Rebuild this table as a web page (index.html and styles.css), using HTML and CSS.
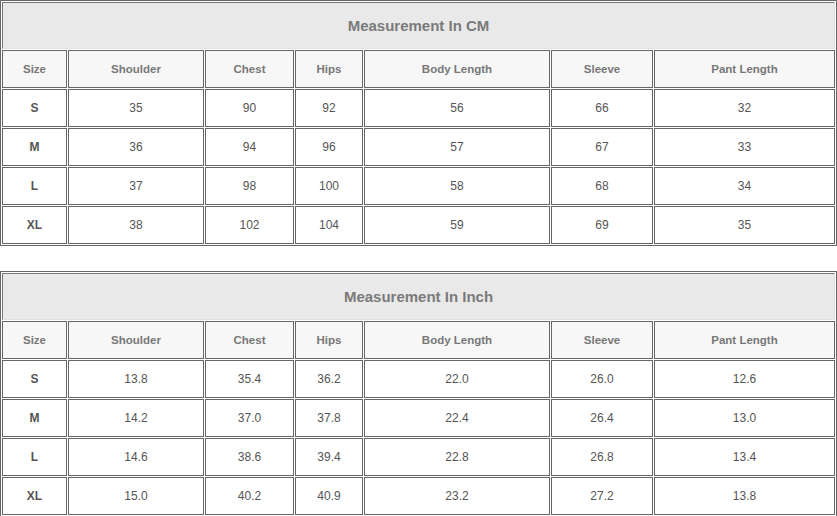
FILE: index.html
```html
<!DOCTYPE html>
<html>
<head>
<meta charset="utf-8">
<link rel="stylesheet" href="styles.css">
</head>
<body>
<div class="page">
  <div class="chart">
    <div class="title">Measurement In CM</div>
    <div class="cell head">Size</div><div class="cell head">Shoulder</div><div class="cell head">Chest</div><div class="cell head">Hips</div><div class="cell head">Body Length</div><div class="cell head">Sleeve</div><div class="cell head">Pant Length</div>
    <div class="cell size">S</div><div class="cell">35</div><div class="cell">90</div><div class="cell">92</div><div class="cell">56</div><div class="cell">66</div><div class="cell">32</div>
    <div class="cell size">M</div><div class="cell">36</div><div class="cell">94</div><div class="cell">96</div><div class="cell">57</div><div class="cell">67</div><div class="cell">33</div>
    <div class="cell size">L</div><div class="cell">37</div><div class="cell">98</div><div class="cell">100</div><div class="cell">58</div><div class="cell">68</div><div class="cell">34</div>
    <div class="cell size">XL</div><div class="cell">38</div><div class="cell">102</div><div class="cell">104</div><div class="cell">59</div><div class="cell">69</div><div class="cell">35</div>
  </div>
  <div class="chart">
    <div class="title">Measurement In Inch</div>
    <div class="cell head">Size</div><div class="cell head">Shoulder</div><div class="cell head">Chest</div><div class="cell head">Hips</div><div class="cell head">Body Length</div><div class="cell head">Sleeve</div><div class="cell head">Pant Length</div>
    <div class="cell size">S</div><div class="cell">13.8</div><div class="cell">35.4</div><div class="cell">36.2</div><div class="cell">22.0</div><div class="cell">26.0</div><div class="cell">12.6</div>
    <div class="cell size">M</div><div class="cell">14.2</div><div class="cell">37.0</div><div class="cell">37.8</div><div class="cell">22.4</div><div class="cell">26.4</div><div class="cell">13.0</div>
    <div class="cell size">L</div><div class="cell">14.6</div><div class="cell">38.6</div><div class="cell">39.4</div><div class="cell">22.8</div><div class="cell">26.8</div><div class="cell">13.4</div>
    <div class="cell size">XL</div><div class="cell">15.0</div><div class="cell">40.2</div><div class="cell">40.9</div><div class="cell">23.2</div><div class="cell">27.2</div><div class="cell">13.8</div>
  </div>
</div>
</body>
</html>
```

FILE: styles.css
```css
html, body {
  margin: 0;
  padding: 0;
  background: #fff;
}
.page {
  display: flex;
  flex-direction: column;
  gap: 25px;
  font-family: "Liberation Sans", Arial, sans-serif;
}
.chart {
  display: grid;
  grid-template-columns: 65px 136px 89px 68px 186px 102px 181px;
  grid-template-rows: 47px repeat(5, 38px);
  gap: 1px;
  padding: 1px;
  border: 1px solid #666;
  width: 837px;
  box-sizing: border-box;
}
.title {
  grid-column: 1 / -1;
  box-sizing: border-box;
  background: #e9e9e9;
  border: 1px solid #e2e2e2;
  border-left-color: #777;
  border-top-color: #777;
  display: flex;
  align-items: center;
  justify-content: center;
  font-size: 15px;
  font-weight: bold;
  color: #7a7a7a;
}
.cell {
  border: 1px solid #666;
  box-sizing: border-box;
  display: flex;
  align-items: center;
  justify-content: center;
  font-size: 12px;
  color: #555;
  background: #fff;
}
.head {
  background: #f7f7f7;
  font-weight: bold;
  font-size: 11.5px;
  color: #777;
}
.size {
  font-weight: bold;
  color: #555;
}
```
